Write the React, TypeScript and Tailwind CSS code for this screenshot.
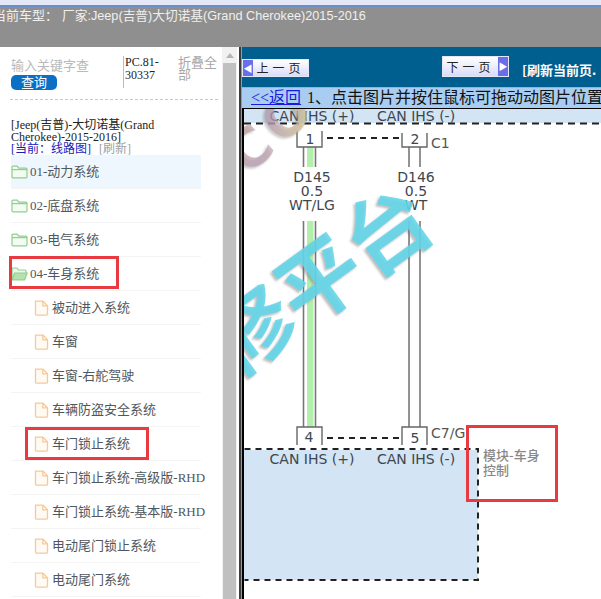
import React from "react";

const serif = "font-['Liberation_Serif','Noto_Sans_CJK_SC',serif]";

const rows: { label: string; kind: "folder" | "open" | "file"; active?: boolean }[] = [
  { label: "01-动力系统", kind: "folder", active: true },
  { label: "02-底盘系统", kind: "folder" },
  { label: "03-电气系统", kind: "folder" },
  { label: "04-车身系统", kind: "open" },
  { label: "被动进入系统", kind: "file" },
  { label: "车窗", kind: "file" },
  { label: "车窗-右舵驾驶", kind: "file" },
  { label: "车辆防盗安全系统", kind: "file" },
  { label: "车门锁止系统", kind: "file" },
  { label: "车门锁止系统-高级版-RHD", kind: "file" },
  { label: "车门锁止系统-基本版-RHD", kind: "file" },
  { label: "电动尾门锁止系统", kind: "file" },
  { label: "电动尾门系统", kind: "file" },
];

function RowIcon({ kind }: { kind: "folder" | "open" | "file" }) {
  if (kind === "file")
    return (
      <svg width="15" height="16" viewBox="0 0 15 16" className="shrink-0" fill="none" stroke="#f5c998" strokeWidth="1.3">
        <path d="M1.5 1.2h7.5l4.5 4.5v8.6a.8.8 0 0 1-.8.8H2.3a.8.8 0 0 1-.8-.8z" fill="#fffaf4" />
        <path d="M8.8 1.2v4.6h4.6" />
      </svg>
    );
  if (kind === "open")
    return (
      <svg width="17" height="14" viewBox="0 0 17 14" className="shrink-0" fill="none" stroke="#8fcf8f" strokeWidth="1.2">
        <path d="M1 12.5V2a1 1 0 0 1 1-1h4l1.5 2H14a1 1 0 0 1 1 1v2" fill="#eef9ee" />
        <path d="M1 12.8 3.6 6h12.6l-2.6 6.8z" fill="#b5e2b0" />
      </svg>
    );
  return (
    <svg width="17" height="14" viewBox="0 0 17 14" className="shrink-0" fill="none" stroke="#8fcf8f" strokeWidth="1.2">
      <path d="M1 2.2a1 1 0 0 1 1-1h4.2l1.5 2H15a1 1 0 0 1 1 1v7.6a1 1 0 0 1-1 1H2a1 1 0 0 1-1-1z" fill="#f3fbf3" />
      <path d="M1 4.6h15" />
    </svg>
  );
}

function TreeRow({ label, kind, active }: { label: string; kind: "folder" | "open" | "file"; active?: boolean }) {
  const isFile = kind === "file";
  return (
    <div
      className={`flex h-[34px] shrink-0 items-center border-b border-[#f4f4f4] pt-[1px] whitespace-nowrap ${isFile ? "gap-[3px] pl-[23px]" : "gap-[2px]"} ${active ? "bg-[#eef7fd]" : ""}`}
    >
      <RowIcon kind={kind} />
      <span className="text-[13px] text-[#50565c]">{label}</span>
    </div>
  );
}

function Diagram() {
  const t = "#3d4750";
  const dash = { stroke: "#222", strokeWidth: 2, strokeDasharray: "7 5", fill: "none" };
  const sans = "'DejaVu Sans',sans-serif";
  const wire = (x: number, y1: number, y2: number) => <line x1={x} x2={x} y1={y1} y2={y2} stroke="#777" strokeWidth="1.6" />;
  return (
    <svg className="block h-full w-full" viewBox="244 109 357 490" preserveAspectRatio="xMinYMin slice">
      <defs>
        <linearGradient id="co" x1="0" y1="0" x2="1" y2="1">
          <stop offset="0" stopColor="#c9a77a" />
          <stop offset="0.45" stopColor="#b79ab5" />
          <stop offset="1" stopColor="#e3dc7a" />
        </linearGradient>
        <filter id="sh" x="-10%" y="-10%" width="120%" height="120%">
          <feDropShadow dx="-2" dy="2" stdDeviation="0.8" floodColor="#777" floodOpacity="0.55" />
        </filter>
      </defs>
      <rect x="244" y="109" width="357" height="14" fill="#d3e4f4" />
      <rect x="244" y="450" width="234" height="130" fill="#d3e4f4" />

      <g fontFamily={sans} fontSize="14" fill={t} textAnchor="middle">
        <text x="312" y="121">CAN IHS (+)</text>
        <text x="416" y="121">CAN IHS (-)</text>
        <text x="312" y="463.5">CAN IHS (+)</text>
        <text x="416" y="463.5">CAN IHS (-)</text>
      </g>

      <line x1="244" x2="601" y1="123.5" y2="123.5" {...dash} />
      <path d="M244.5 449H478V580H244.5" {...dash} strokeDasharray="6 5" />
      <line x1="327" x2="400" y1="138" y2="138" {...dash} strokeDasharray="6 5" />
      <line x1="327" x2="400" y1="438" y2="438" {...dash} strokeDasharray="6 5" />

      {[
        [147, 167],
        [221, 427],
      ].map(([a, b]) => (
        <g key={a}>
          <rect x="307" y={a} width="6.5" height={b - a} fill="#b2efab" />
          {wire(303.5, a, b)}
          {wire(315.5, a, b)}
          {wire(409, a, b)}
          {wire(420, a, b)}
        </g>
      ))}

      <g fill="#fff" stroke="#666" strokeWidth="1.4">
        <path d="M297 131V147H322V131" />
        <path d="M402 133V147H427V133" />
        <path d="M297 445V427H322V445" />
        <path d="M402 445V427H427V445" />
      </g>

      <g fontFamily={sans} fontSize="14" fill={t} textAnchor="middle">
        <text x="310" y="144">1</text>
        <text x="415" y="144">2</text>
        <text x="309" y="442">4</text>
        <text x="415" y="443">5</text>
        <text x="312" y="182">D145</text>
        <text x="312" y="196">0.5</text>
        <text x="312" y="210" fontWeight="500">WT/LG</text>
        <text x="416" y="182">D146</text>
        <text x="416" y="196">0.5</text>
        <text x="416" y="210">WT</text>
      </g>
      <g fontFamily={sans} fontSize="14" fill="#555">
        <text x="431" y="148">C1</text>
        <text x="431" y="438">C7/G</text>
      </g>
      <g fontFamily="'Noto Sans CJK SC',sans-serif" fontSize="13" fill="#888" fontWeight="500">
        <text x="483" y="459.5">模块-车身</text>
        <text x="483" y="474.5">控制</text>
      </g>

      <g filter="url(#sh)">
        <text
          transform="translate(236 379) rotate(-36)"
          fontFamily="'Noto Sans CJK SC',sans-serif"
          fontWeight="700"
          fontSize="84"
          fill="#62d5e8"
          fillOpacity="0.88"
        >
          修平台
        </text>
        <text
          transform="translate(248 176) rotate(-42)"
          fontFamily="'DejaVu Sans',sans-serif"
          fontWeight="700"
          fontSize="54"
          letterSpacing="6"
          fill="url(#co)"
          fillOpacity="0.7"
        >
          CO
        </text>
      </g>
    </svg>
  );
}

function PageButton({ label, dir }: { label: string; dir: "prev" | "next" }) {
  const arrow = (
    <span className="flex h-full w-[10px] items-center justify-center bg-[#6a6ee8] text-[9px] leading-none text-white">
      {dir === "prev" ? "◀" : "▶"}
    </span>
  );
  return (
    <div className="flex h-full w-[67px] items-stretch border border-[#e4e6fa] bg-gradient-to-b from-[#ffffff] to-[#d9dcf7]">
      {dir === "prev" && arrow}
      <span className="flex flex-1 items-center justify-center text-[12px] tracking-[4px] text-[#222]">{label}</span>
      {dir === "next" && arrow}
    </div>
  );
}

export default function App() {
  return (
    <div className={`relative flex h-[599px] w-[601px] flex-col overflow-hidden bg-white ${serif}`}>
      <div className="h-[5px] shrink-0 bg-[#e3e7f6]" />
      <div className="h-[2px] shrink-0 bg-[#6b8ecb]" />
      <div className="flex h-[40px] shrink-0 whitespace-pre bg-[#8f8f8f] pt-[1px] font-['Liberation_Sans','Noto_Sans_CJK_SC',sans-serif] text-[12.7px] leading-[16px] text-[#f0f0f0]">
        <span className="-ml-[7px] text-[13px]">当前车型：</span>
        <span className="ml-[4px]">厂家:Jeep(吉普)大切诺基(Grand Cherokee)2015-2016</span>
      </div>

      <div className="flex min-h-0 flex-1">
        <aside className="flex w-[222px] shrink-0 flex-col overflow-hidden">
          <div className="ml-[10px] mr-[4px] flex h-[53px] items-start gap-0 border-b border-dashed border-[#c8c8c8] pt-[10px]">
            <div className="w-[113px] shrink-0 pl-[1px]">
              <div className="text-[13px] leading-[18px] text-[#b9b9b9]">输入关键字查</div>
              <div className="flex h-[15px] w-[46px] items-center justify-center rounded-[5px] bg-[#0b6fc6] text-[13px] text-white">查询</div>
            </div>
            <div className="-mt-[1px] h-[32px] w-[55px] shrink-0 border-l border-[#bbb] pl-[1px] text-[12px] leading-[13px] text-[#222]">
              PC.81-
              <br />
              30337
            </div>
            <div className="w-[40px] shrink-0 text-[13px] leading-[12px] text-[#a8a8a8]">折叠全部</div>
          </div>
          <div className="mx-[11px] mt-[19px] h-[36px] w-[190px] text-[12px] leading-[12px] text-[#222]">
            [Jeep(吉普)-大切诺基(Grand Cherokee)-2015-2016]
            <div className="whitespace-nowrap leading-[13px]">
              <span className="text-[#1a1ab8]">[当前：线路图]</span>
              <span className="ml-[8px] text-[#a0a0a0]">[刷新]</span>
            </div>
          </div>
          <div className="ml-[11px] flex w-[190px] flex-col">
            {rows.map((r) => (
              <TreeRow key={r.label} {...r} />
            ))}
          </div>
        </aside>

        <div className="flex w-[15px] shrink-0 flex-col items-stretch bg-[#f1f1f1] px-[1px]">
          <div className="flex h-[16px] shrink-0 items-center justify-center">
            <div className="h-0 w-0 border-x-[4px] border-b-[5px] border-x-transparent border-b-[#b5b5b5]" />
          </div>
          <div className="flex-1 bg-[#c0c0c0]" />
        </div>

        <div className="w-[2px] shrink-0 bg-white" />
        <div className="w-[2px] shrink-0 bg-[#3c3c3c]" />
        <div className="w-[1px] shrink-0 bg-[#999]" />

        <main className="flex min-w-0 flex-1 flex-col">
          <div className="flex h-[40px] shrink-0 items-end bg-[#015f8f] pb-[10px] font-['Noto_Sans_CJK_SC',sans-serif]">
            <div className="h-[18px]">
              <PageButton label="上一页" dir="prev" />
            </div>
            <div className="ml-[133px] h-[21px]">
              <PageButton label="下一页" dir="next" />
            </div>
            <span className="ml-[13px] whitespace-nowrap text-[13px] font-bold leading-[14px] text-white">[刷新当前页.</span>
          </div>
          <div className="h-[1px] shrink-0 bg-[#8fb4d4]" />
          <div className="flex h-[21px] shrink-0 items-center whitespace-nowrap border-b border-black bg-[#a9cdf0] pl-[9px] text-[16px] leading-[20px] text-[#111]">
            <span className="text-[#1a1ae0] underline">&lt;&lt;返回</span>
            <span className="ml-[6px]">1、点击图片并按住鼠标可拖动动图片位置</span>
          </div>
          <div className="flex min-h-0 flex-1">
            <div className="w-[2px] shrink-0 bg-black" />
            <div className="min-w-0 flex-1 overflow-hidden">
              <Diagram />
            </div>
          </div>
        </main>
      </div>

      <div className="absolute left-[9px] top-[256px] h-[33px] w-[110px] border-[3px] border-[#e83a40]" />
      <div className="absolute left-[25px] top-[427px] h-[33px] w-[124px] border-[3px] border-[#e83a40]" />
      <div className="absolute left-[466px] top-[425px] h-[77px] w-[92px] border-[3px] border-[#e83a40]" />
    </div>
  );
}
